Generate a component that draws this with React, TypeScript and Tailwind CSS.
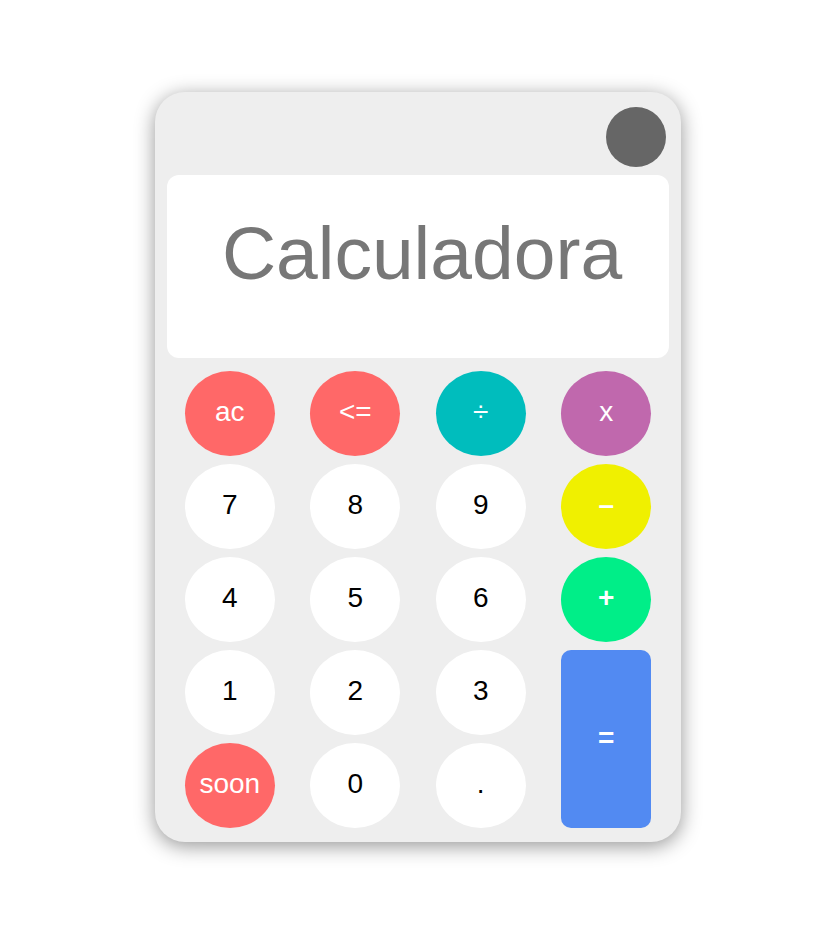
type Key = {
    label: string
    className: string
}

const keys: Key[] = [
    { label: "ac", className: "bg-[#ff6868] text-white" },
    { label: "<=", className: "bg-[#ff6868] text-white" },
    { label: "÷", className: "bg-[#00bdbd] text-white" },
    { label: "x", className: "bg-[#c068ad] text-white" },
    { label: "7", className: "bg-white text-black" },
    { label: "8", className: "bg-white text-black" },
    { label: "9", className: "bg-white text-black" },
    { label: "–", className: "bg-[#f0f000] text-white font-bold" },
    { label: "4", className: "bg-white text-black" },
    { label: "5", className: "bg-white text-black" },
    { label: "6", className: "bg-white text-black" },
    { label: "+", className: "bg-[#00ee88] text-white font-bold" },
    { label: "1", className: "bg-white text-black" },
    { label: "2", className: "bg-white text-black" },
    { label: "3", className: "bg-white text-black" },
]

const lastRow: Key[] = [
    { label: "soon", className: "bg-[#ff6868] text-white" },
    { label: "0", className: "bg-white text-black" },
    { label: ".", className: "bg-white text-black" },
]

export default function App() {
    return (
        <div className="flex min-h-[940px] justify-center bg-white pl-[14px] pt-[92px] font-['Liberation_Sans',Arial,sans-serif]">
            <Calculator />
        </div>
    )
}

function Calculator() {
    return (
        <div className="flex h-[750px] w-[526px] flex-col rounded-[30px] bg-[#eeeeee] px-[12px] pt-[15px] pb-[14px] shadow-[0_4px_20px_rgba(0,0,0,0.42)]">
            <div className="flex justify-end pr-[3px]">
                <div className="h-[60px] w-[60px] rounded-full bg-[#666666]"></div>
            </div>
            <div className="mt-[8px] flex h-[183px] items-center justify-center rounded-[12px] bg-white pb-[26px] pl-[8px]">
                <span className="text-[75px] leading-none text-[#777777]">Calculadora</span>
            </div>
            <div className="mt-[13px] grid grid-cols-4 grid-rows-[repeat(5,85px)] gap-y-[8px]">
                {keys.map((k, i) => (
                    <CalcButton key={i} k={k} />
                ))}
                <div className="row-span-2 flex justify-center">
                    <button className="flex h-full w-[90px] items-center justify-center rounded-[10px] bg-[#528af2] pb-[3px] text-[28px] font-bold text-white">=</button>
                </div>
                {lastRow.map((k, i) => (
                    <CalcButton key={'l' + i} k={k} />
                ))}
            </div>
        </div>
    )
}

function CalcButton({ k }: { k: Key }) {
    return (
        <div className="flex justify-center">
            <button className={"flex h-[85px] w-[90px] items-center justify-center rounded-[50%] pb-[3px] text-[28px] " + k.className}>
                {k.label}
            </button>
        </div>
    )
}
